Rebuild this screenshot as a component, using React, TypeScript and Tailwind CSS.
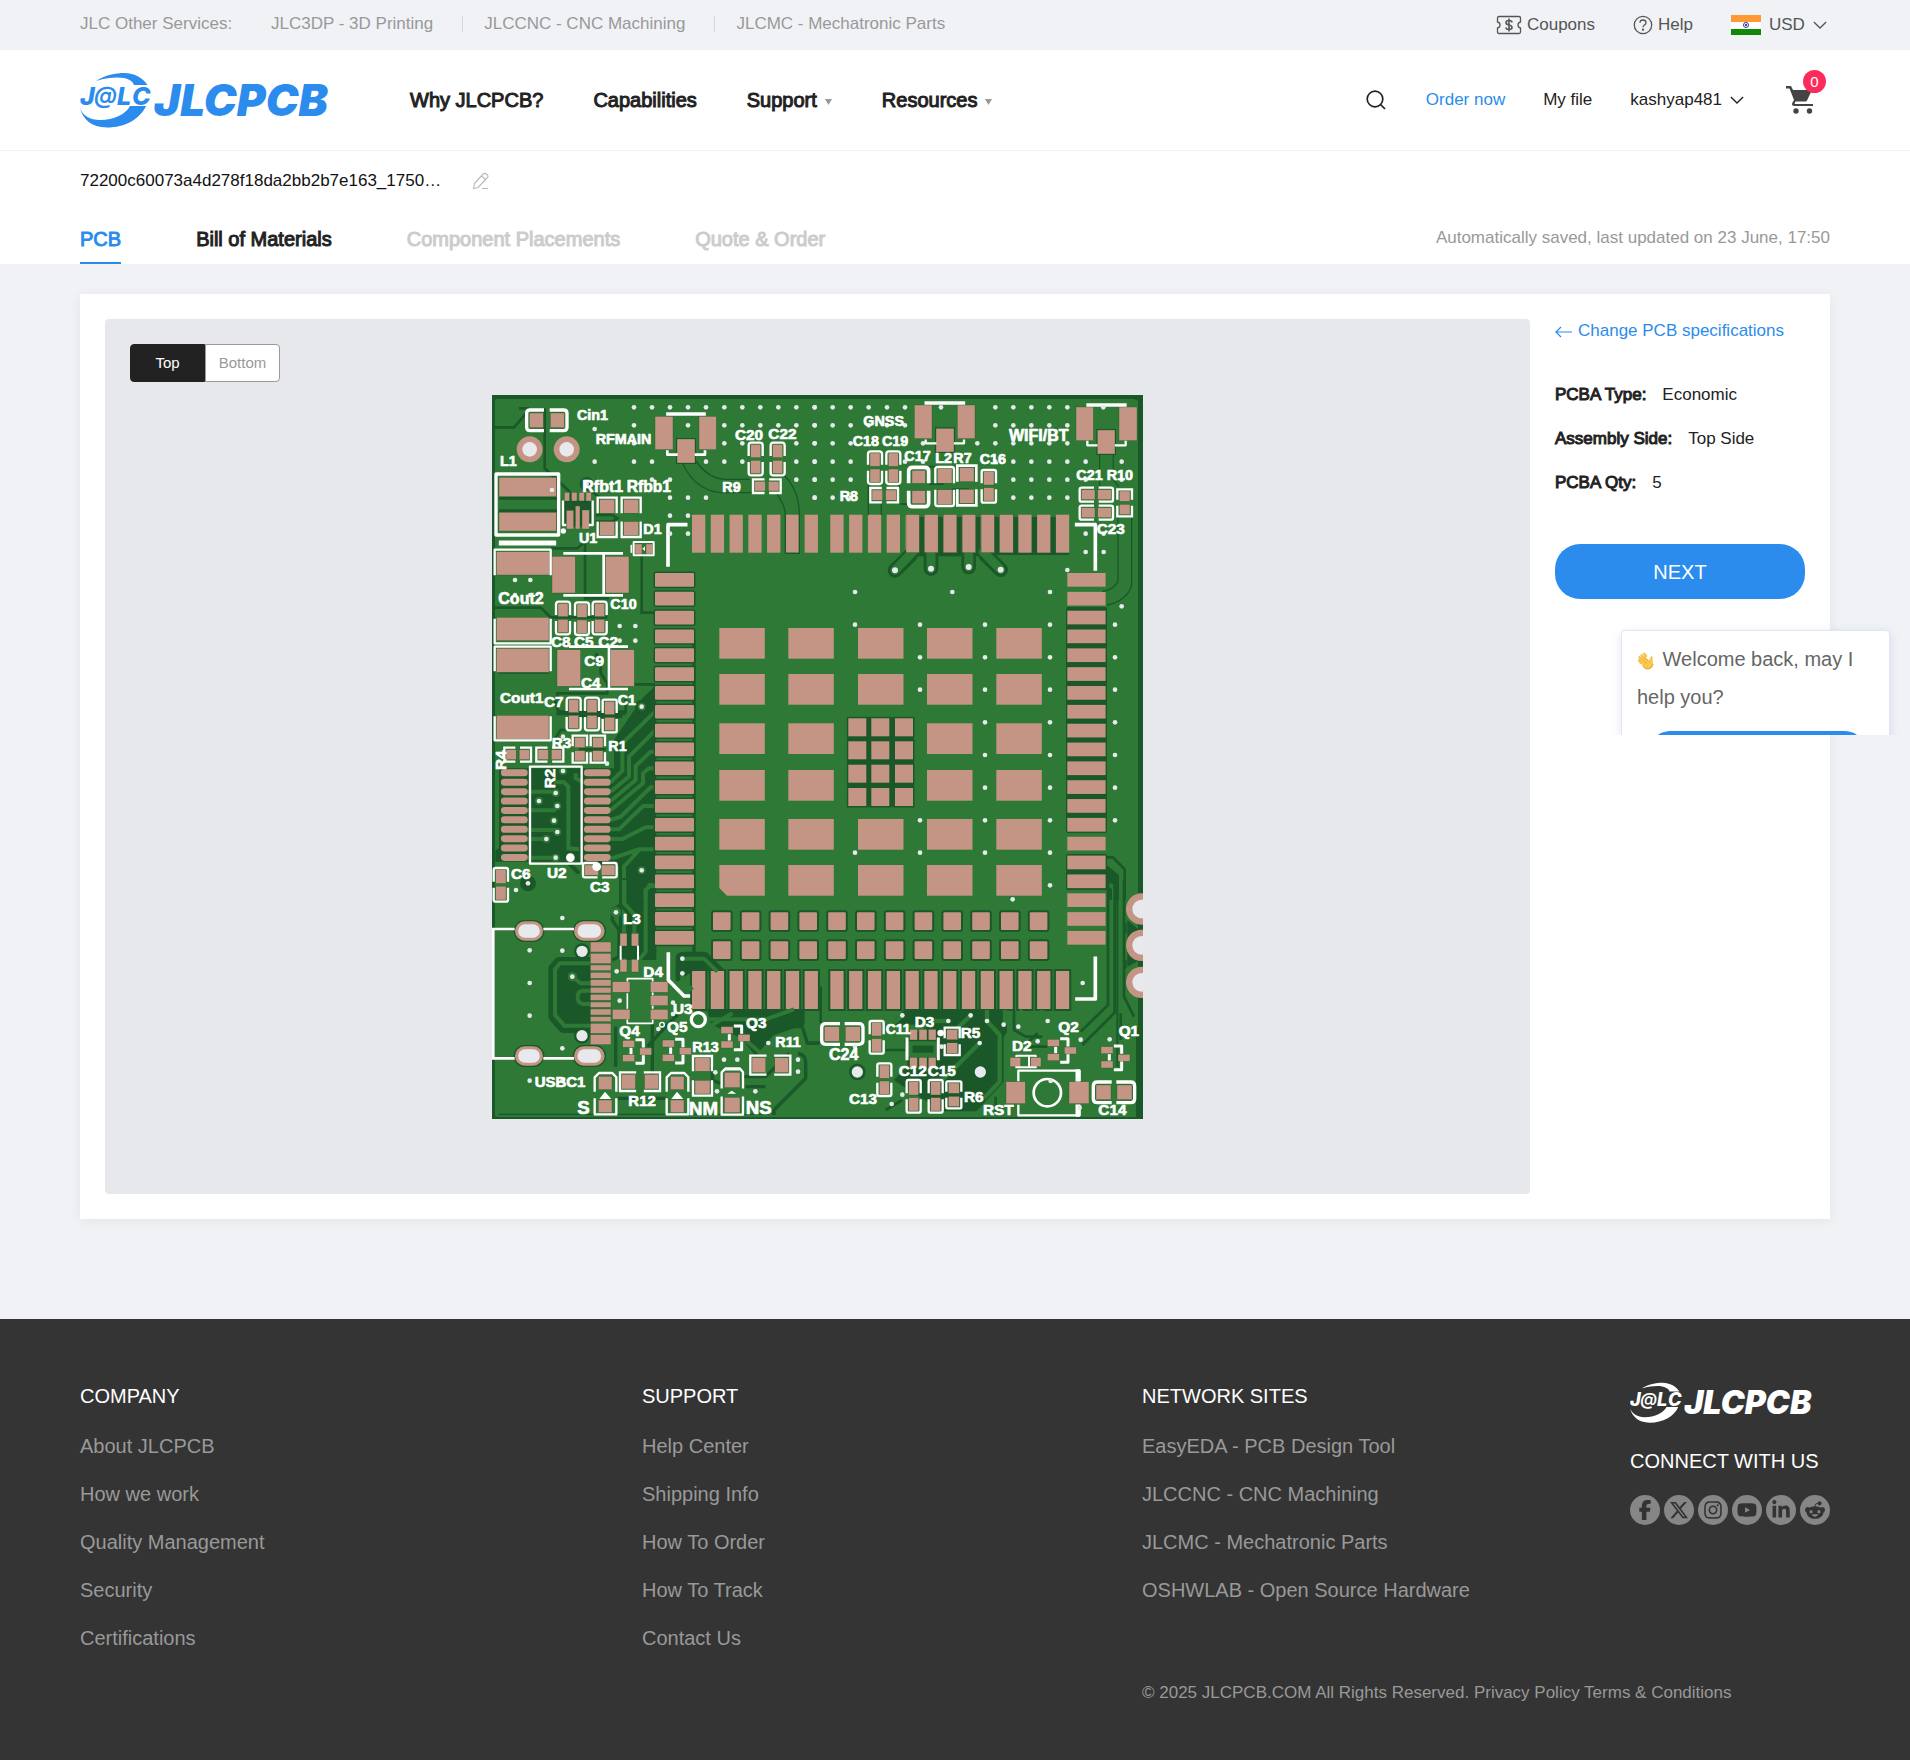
import React, { useState } from "react";
import { FaFacebookF, FaInstagram, FaLinkedinIn, FaRedditAlien, FaXTwitter, FaYoutube } from "react-icons/fa6";

const BOARD = "#2e7935";
const DARK = "#1a5829";
const PAD = "#c49484";
const HOLE = "#e7e9ed";

type Rect = [number, number, number, number];
/* direction, x, y, width, height, gap between the pads, corner radius */
type Part = ["H" | "V", number, number, number, number, number, number, number?];
type Label = [string, number, number, number?, number?];

function partPads([dir, x, y, w, h, gap, , sw = 6]: Part): Rect[] {
  const i = sw - 1;
  if (dir === "V") {
    const ph = (h - 2 * i - gap) / 2;
    return [
      [x + i + 1, y + i, w - 2 * i - 2, ph],
      [x + i + 1, y + i + ph + gap, w - 2 * i - 2, ph],
    ];
  }
  const pw = (w - 2 * i - gap) / 2;
  return [
    [x + i, y + i + 1, pw, h - 2 * i - 2],
    [x + i + pw + gap, y + i + 1, pw, h - 2 * i - 2],
  ];
}

function partOutline([dir, x, y, w, h, gap, r]: Part): string {
  const g = Math.max(gap, 18) / 2;
  if (dir === "V") {
    const m = y + h / 2;
    return `M${x} ${m - g}V${y + r}Q${x} ${y} ${x + r} ${y}H${x + w - r}Q${x + w} ${y} ${x + w} ${y + r}V${m - g}M${x} ${m + g}V${y + h - r}Q${x} ${y + h} ${x + r} ${y + h}H${x + w - r}Q${x + w} ${y + h} ${x + w} ${y + h - r}V${m + g}`;
  }
  const m = x + w / 2;
  const k = g - 2;
  return `M${m - k} ${y}H${x + r}Q${x} ${y} ${x} ${y + r}V${y + h - r}Q${x} ${y + h} ${x + r} ${y + h}H${m - k}M${m + k} ${y}H${x + w - r}Q${x + w} ${y} ${x + w} ${y + r}V${y + h - r}Q${x + w} ${y + h} ${x + w - r} ${y + h}H${m + k}`;
}

type TileProps = {
  x: number;
  y: number;
  back?: React.ReactNode;
  front?: React.ReactNode;
  pads?: Rect[];
  parts?: Part[];
  silk?: [string, number][];
  labels?: Label[];
  vias?: [number, number][];
};

/* One section of the board, drawn at three units to the pixel. */
function Tile({ x, y, back, front, pads = [], parts = [], silk = [], labels = [], vias = [] }: TileProps) {
  return (
    <g transform={`translate(${x} ${y}) scale(0.33333)`}>
      {back}
      {[...pads, ...parts.flatMap(partPads)].map(([a, b, w, h], i) => (
        <rect key={i} x={a} y={b} width={w} height={h} fill={PAD} stroke={DARK} strokeWidth="1" />
      ))}
      <g fill="none" stroke="#fff">
        {parts.map((p, i) => (
          <path key={i} d={partOutline(p)} strokeWidth={(p[7] ?? 6) + 1} />
        ))}
        {silk.map(([d, w], i) => (
          <path key={i} d={d} strokeWidth={w + 1} strokeLinecap="square" strokeLinejoin="round" />
        ))}
      </g>
      {front}
      <g fill={HOLE}>
        {vias.map(([a, b], i) => (
          <circle key={i} cx={a} cy={b} r="7" />
        ))}
      </g>
      <g
        fill="#fff"
        stroke="#fff"
        strokeWidth="2"
        strokeLinejoin="round"
        fontFamily='"Liberation Sans", Arial, sans-serif'
        fontWeight="700"
      >
        {labels.map(([t, a, b, size = 43, rot = 0], i) => (
          <text key={i} x={a} y={b} fontSize={size} transform={rot ? `rotate(${rot} ${a} ${b})` : undefined}>
            {t}
          </text>
        ))}
      </g>
    </g>
  );
}

const range = (n: number) => Array.from({ length: n }, (_, i) => i);
const rowVias = (y: number, xs: number[]): [number, number][] => xs.map((x) => [x, y]);

function transistor(dx: number, dy: number): { pads: Rect[]; silk: [string, number][] } {
  return {
    pads: [
      [431 + dx, 481 + dy, 36, 21],
      [431 + dx, 524 + dy, 36, 21],
      [482 + dx, 504 + dy, 36, 21],
    ],
    silk: [
      [`M${474 + dx} ${479 + dy}H${493 + dx}V${498 + dy}M${493 + dx} ${530 + dy}V${550 + dy}H${474 + dx}`, 8],
      [`M${456 + dx} ${508 + dy}V${518 + dy}`, 8],
    ],
  };
}
const q4 = transistor(0, 0);
const q5 = transistor(119, -1);
const q3 = transistor(295, -41);
const q2 = transistor(284, -3);
const q1 = transistor(445, 19);

function Board() {
  const padX = [...range(7).map((i) => 693 + i * 18.77), ...range(13).map((i) => 831.3 + i * 18.8)];
  const padY = range(20).map((i) => 573 + i * 18.84);
  const bigX = [720.3, 789.3, 859, 928, 997.3];
  const bigY = [628, 674, 723.3, 770, 819, 865];
  return (
    <svg viewBox="493 395 651 724" className="h-auto w-full max-w-[651px]" role="img" aria-label="Top side of the circuit board">
      <rect x="493" y="395" width="651" height="724" fill={DARK} />
      <rect x="496" y="399" width="643" height="718" rx="2" fill={BOARD} />

      {/* copper behind the module */}
      <g fill={DARK}>
        <rect x="914" y="517" width="156" height="38" />
        <rect x="1067" y="607" width="41" height="226" rx="2" />
        <rect x="1067" y="854" width="41" height="36" rx="2" />
        <rect x="848" y="717" width="67" height="90" rx="2" />
      </g>
      <g transform="translate(480 640) scale(0.33333)">
        <path d="M532 135L490 175L405 300V385H60V665H300L420 680V960H532Z" fill={DARK} />
        <path d="M645 0V950" stroke={DARK} strokeWidth="10" />
        <g fill="none" stroke={BOARD} strokeWidth="12">
          <path d="M395 427L430 392V310L528 215M395 455L450 410V350L528 272M395 483L470 420V378L515 335H528M395 511L492 430V400L510 385H528M395 540L425 530L515 442H528M395 568H420L492 498H528M395 597H430L500 562H528M395 653H405L480 628H550M435 960V680L480 630M500 780V745L510 735H528" />
          <path d="M145 455H230M145 511H225L235 498M145 597H200M145 653H230M225 427H255L268 440V625L300 628M145 570H235M290 400V415L316 428" />
        </g>
      </g>

      {padX.map((x, i) => (
        <g key={i}>
          <rect x={x} y="514.7" width="13.3" height="38" fill={PAD} />
          <rect x={x} y="971" width="13.3" height="38" fill={PAD} stroke={DARK} strokeWidth="4" paintOrder="stroke" />
        </g>
      ))}
      {padY.map((y, i) => (
        <g key={i} fill={PAD}>
          <rect x="656" y={y} width="39" height="13.7" rx="1" stroke={DARK} strokeWidth="3" paintOrder="stroke" />
          <rect x="1068.3" y={y} width="38.3" height="13.7" />
        </g>
      ))}
      {bigY.map((y, r) =>
        bigX.map((x, c) => {
          if (c === 2 && (r === 2 || r === 3)) return null;
          if (c === 0 && r === 5) return <path key={`${r}${c}`} d="M720.3 865H765.8V895.7H728L720.3 888Z" fill={PAD} />;
          return <rect key={`${r}${c}`} x={x} y={y} width="45.5" height="30.7" fill={PAD} />;
        }),
      )}
      {[718.3, 741.3, 764.7, 788].map((y) =>
        [849.3, 872.3, 896].map((x) => <rect key={`${x}${y}`} x={x} y={y} width="18" height="18" fill={PAD} stroke={DARK} strokeWidth="3" paintOrder="stroke" />),
      )}
      {[912.3, 941.3].map((y) =>
        range(12).map((i) => (
          <rect key={`${y}${i}`} x={714 + i * 28.8} y={y} width="17.6" height="17.6" rx="1" fill={PAD} stroke={DARK} strokeWidth="4" paintOrder="stroke" />
        )),
      )}

      {/* upper left */}
      <Tile
        x={480}
        y={385}
        back={
          <g fill="none" stroke={DARK} strokeWidth="8">
            <path d="M48 127H105L150 75M120 70H150M197 70V250L272 320V350M60 340H235M60 377H235M215 490H295L318 470V640H390M488 510V683H528M48 668H185L215 697H385" />
            <path d="M610 233C640 300 690 323 730 323H820M648 225C680 270 710 283 740 283H812M915 270C945 300 961 340 961 390M895 328C910 350 919 370 919 390M919 388V505H961V388" strokeWidth="4" />
            <rect x="258" y="350" width="80" height="70" fill={DARK} />
            <circle cx="323" cy="297" r="17" fill={DARK} />
            <path d="M340 320L372 345M350 390H400L415 400L400 410H350" />
            <rect x="594" y="162" width="54" height="72" strokeWidth="6" />
          </g>
        }
        pads={[
          [60, 277, 172, 58], [60, 382, 172, 56], [256, 322, 16, 26], [278, 322, 16, 26], [300, 322, 16, 26], [321, 322, 16, 26],
          [262, 376, 22, 56], [289, 363, 14, 69], [309, 375, 22, 57], [468, 477, 21, 30], [501, 477, 20, 30], [52, 500, 160, 70],
          [52, 697, 158, 70], [219, 514, 70, 110], [379, 514, 71, 110], [528, 94, 54, 100], [660, 94, 52, 100], [594, 162, 54, 72],
        ]}
        parts={[
          ["H", 143, 75, 121, 62, 21, 10, 9], ["V", 356, 338, 57, 118, 25, 0], ["V", 428, 338, 57, 118, 25, 0],
          ["V", 809, 173, 42, 98, 8, 8], ["V", 875, 173, 42, 98, 8, 8], ["H", 822, 283, 83, 41, 9, 0],
          ["V", 231, 650, 42, 98, 8, 8], ["V", 288, 652, 42, 98, 8, 8], ["V", 341, 650, 42, 98, 8, 8],
        ]}
        silk={[
          ["M51 267H239V450H51Z", 9], ["M67 474H224", 14], ["M47 567V494H215V567M47 705V775H215V705", 6], ["M257 505H428M374 505V630M257 631H428", 7],
          ["M252 350V420H258M341 350V420H333", 6], ["M464 471H524V511H464Z", 5], ["M457 482V501", 4], ["M567 540V419H620", 10],
          ["M567 87H675", 10], ["M565 200V209H592M651 209H678V200", 7],
        ]}
        front={
          <>
            {[152, 263].map((cx) => (
              <g key={cx}>
                <circle cx={cx} cy="193" r="39" fill={PAD} />
                <circle cx={cx} cy="193" r="22" fill={HOLE} />
              </g>
            ))}
            <circle cx="253" cy="438" r="8" fill="#fff" />
            <path d="M490 491L498 484V498Z" fill="#fff" />
          </>
        }
        vias={[
          ...rowVias(67, [465, 519, 573, 627, 681, 736, 790, 844, 898, 952, 1007]),
          ...rowVias(121, [465, 627, 736, 790, 844, 898, 952, 1007]),
          ...rowVias(175, [465, 736, 790, 952, 1007]),
          ...rowVias(230, [347, 465, 519, 681, 736, 790, 952, 1007]),
          ...rowVias(284, [519, 573, 952, 1007]),
          ...rowVias(338, [573, 627, 681, 1007]),
          ...rowVias(392, [573, 627]),
          ...rowVias(446, [573, 627]),
          [347, 132], [219, 315], [323, 297], [108, 585], [154, 585], [108, 630], [154, 630], [422, 723], [469, 723], [422, 767], [469, 767],
        ]}
        labels={[
          ["Cin1", 294, 106], ["RFMAIN", 350, 178], ["C20", 768, 166, 46], ["C22", 868, 162, 46], ["L1", 63, 244], ["Rfbt1", 310, 320, 48],
          ["Rfbb1", 443, 320, 47], ["R9", 730, 320], ["U1", 300, 475], ["D1", 493, 447], ["Cout2", 58, 657, 48], ["C10", 394, 672],
          ["C8", 216, 785, 46], ["C5", 285, 785, 46], ["C2", 358, 785, 46],
        ]}
      />

      {/* upper right */}
      <Tile
        x={810}
        y={385}
        back={
          <g fill="none" stroke={DARK}>
            <path d="M305 510L258 556M366 510V551M479 510V546M530 510L575 554" strokeWidth="44" strokeLinecap="round" />
            <path d="M310 508H550" strokeWidth="12" />
            <path d="M312 500L258 556M366 500V551M479 500V546M522 500L575 554" stroke={BOARD} strokeWidth="27" strokeLinecap="round" />
            <path d="M178 300V390M217 350V390M872 205V310M913 205V285L930 305M927 395V590C915 610 895 618 880 620M968 395V600C960 635 925 655 893 660M985 45L972 38" strokeWidth="4" />
            <path d="M360 297H405M430 313H480M360 245H385M270 290V310M275 357H300" strokeWidth="6" />
            <path d="M381 130H435V201H381ZM865 135H918V207H865Z" strokeWidth="6" />
            {[258, 366, 479, 575].map((x, i) => (
              <circle key={x} cx={x} cy={[556, 551, 546, 554][i]} r="9" fill={HOLE} stroke="none" />
            ))}
          </g>
        }
        pads={[
          [316, 60, 53, 101], [445, 60, 53, 101], [381, 130, 54, 71], [801, 66, 52, 101], [930, 66, 54, 101], [865, 135, 53, 72],
          ...range(6).map((i): Rect => [291 + i * 56.3, 389, 40, 114]),
        ]}
        parts={[
          ["V", 177, 199, 42, 98, 8, 8], ["V", 232, 199, 42, 98, 8, 8], ["H", 184, 309, 83, 43, 9, 0], ["V", 299, 247, 60, 118, 22, 12, 10],
          ["V", 379, 246, 56, 117, 20, 7], ["V", 445, 242, 57, 119, 23, 0, 7], ["V", 518, 255, 43, 98, 8, 6], ["H", 812, 308, 100, 42, 8, 6],
          ["H", 812, 362, 100, 42, 8, 6], ["V", 925, 313, 44, 81, 9, 0],
        ]}
        silk={[
          ["M352 54H463", 10], ["M350 167V175H379M438 175H465V167", 6], ["M837 60H948", 9], ["M835 171V181H862M921 181H950V171", 6], ["M803 419H859V552", 10],
        ]}
        vias={[
          ...rowVias(67, [17, 71, 125, 179, 234, 288, 396, 559, 613, 667, 721, 775, 883]),
          ...rowVias(121, [17, 71, 125, 179, 234, 288, 559, 613, 667, 721, 775]),
          ...rowVias(175, [17, 71, 125, 342, 505, 559, 613, 667, 721, 775]),
          ...rowVias(230, [17, 71, 125, 288, 342, 559, 613, 667, 721, 775, 830, 938]),
          ...rowVias(284, [17, 71, 125, 613, 667, 721, 775, 830, 938]),
          ...rowVias(338, [17, 71, 125, 613, 667, 721, 775]),
          ...rowVias(446, [830, 884]),
          ...rowVias(501, [830, 884]),
          ...rowVias(621, [138, 430, 723]),
          ...rowVias(719, [138, 333, 528, 723, 918]),
          [775, 555], [938, 664],
        ]}
        labels={[
          ["GNSS", 163, 122], ["C18", 131, 183], ["C19", 219, 183], ["C17", 286, 228], ["L2", 379, 235], ["R7", 433, 234], ["C16", 512, 237],
          ["WIFI/BT", 600, 167, 48], ["C21", 802, 286], ["R10", 893, 286], ["R8", 92, 348], ["C23", 863, 446, 46],
        ]}
      />

      {/* middle left */}
      <Tile
        x={480}
        y={640}
        back={
          <g fill="none" stroke={DARK} strokeWidth="8">
            <path d="M235 175V160H385V130L365 100V50M228 180L238 215H440V170M300 328H380M232 222L440 222M445 133H528M60 97H210M225 300L245 270H262M350 40L365 60M300 230H430" />
            <circle cx="488" cy="200" r="16" fill={BOARD} />
            <circle cx="488" cy="691" r="16" fill={BOARD} />
            <circle cx="147" cy="730" r="20" fill={DARK} />
            <path d="M55 665V635L66 628M270 670L300 700" strokeWidth="12" />
            {[[230, 459], [180, 483], [235, 498], [225, 542], [235, 576], [202, 597], [230, 653], [252, 393]].map(([a, b]) => (
              <circle key={`${a}${b}`} cx={a} cy={b} r="12" fill={BOARD} stroke="none" />
            ))}
          </g>
        }
        pads={[[52, 25, 158, 72], [52, 226, 158, 72], [234, 29, 71, 110], [395, 29, 71, 110]]}
        parts={[
          ["V", 263, 173, 42, 98, 8, 8], ["V", 318, 173, 42, 98, 8, 8], ["V", 371, 179, 42, 98, 8, 4], ["V", 281, 287, 43, 81, 9, 0],
          ["V", 335, 287, 43, 81, 9, 0], ["H", 76, 323, 80, 42, 9, 0], ["H", 172, 323, 81, 42, 9, 0], ["H", 312, 669, 101, 43, 8, 6], ["V", 44, 684, 43, 101, 8, 6],
        ]}
        silk={[
          ["M47 90V20H215V90M47 232V301H215V232", 6], ["M274 20H443M390 20V147M274 147H443", 7], ["M153 380H308V671H153Z", 6],
        ]}
        front={
          <>
            {range(10).map((i) => (
              <g key={i} fill={PAD}>
                <rect x="66" y={388 + i * 28.2} width="80" height="21" rx="10" />
                <rect x="315" y={388 + i * 28.2} width="80" height="21" rx="10" />
              </g>
            ))}
            <circle cx="274" cy="653" r="13" fill="#fff" />
            <circle cx="353" cy="680" r="13" fill="#fff" />
          </>
        }
        vias={[
          [488, 200], [488, 691], [147, 730], [384, 371], [230, 459], [180, 483], [235, 498], [225, 542], [235, 576], [202, 597], [230, 653], [252, 393], [252, 290], [111, 750],
        ]}
        labels={[
          ["C9", 316, 79, 46], ["C4", 306, 144, 46], ["C1", 416, 195], ["Cout1", 63, 190, 46], ["C7", 195, 200, 46], ["R3", 218, 325, 46], ["R1", 388, 333],
          ["R4", 82, 390, 46, -90], ["R2", 227, 445, 46, -90], ["U2", 204, 713, 46], ["C3", 333, 757, 46], ["C6", 96, 718, 46],
        ]}
      />

      {/* middle right */}
      <Tile
        x={810}
        y={640}
        back={
          <g fill="none" stroke={DARK} strokeWidth="8">
            <path d="M893 652H912L947 688V780M893 745L905 750V780" />
            <path d="M893 675L930 705V780H915V735L893 722Z" fill={DARK} stroke="none" />
          </g>
        }
        vias={[
          ...rowVias(52, [333, 528, 723, 918]),
          ...rowVias(149, [333, 528, 723, 918]),
          ...rowVias(247, [528, 723, 918]),
          ...rowVias(345, [528, 723, 918]),
          ...rowVias(443, [528, 723, 918]),
          ...rowVias(541, [333, 528, 723, 918]),
          ...rowVias(638, [138, 333, 528, 723]),
          [723, 736], [611, 778],
        ]}
      />

      {/* lower left */}
      <Tile
        x={480}
        y={880}
        back={
          <g fill="none" stroke={DARK} strokeWidth="10" strokeLinejoin="round">
            <path d="M335 245H240L222 265V410L252 445H335" strokeWidth="28" />
            <path d="M335 250H245L228 270V405L258 437H335Z" fill={DARK} stroke="none" />
            <path d="M335 250H243L228 268V405L256 437H335M335 310H305L280 290M335 332H310Q296 334 296 352Q296 370 312 372H425V390" stroke={BOARD} strokeWidth="12" />
            <path d="M400 90L425 75L460 110V160M400 90V120L420 150V230L400 240M420 0H500V60L470 110M500 0V210L480 240" />
            <path d="M436 0V70L466 105V160M528 18H512L500 30V215L440 290" stroke={BOARD} strokeWidth="12" />
            <path d="M595 235Q595 220 615 220H680L728 268H640L595 300Z" fill={DARK} />
            <path d="M610 236H675L715 275M610 280V300L640 330" stroke={BOARD} strokeWidth="12" />
            <path d="M690 392H972V430L880 462L830 520L790 470L700 430Z" fill={DARK} />
            <path d="M690 418H860L945 388M800 480L845 520M690 440L760 400" stroke={BOARD} strokeWidth="12" />
            <path d="M520 430V590M505 500L560 440L600 400M890 440H970L985 490H1020M957 520Q980 525 980 545V595L885 690V705M795 590H860L930 520M800 620H860M416 655H560M700 560V600L725 610M410 440V560" />
            <path d="M420 200H475V230H420Z" fill={DARK} />
            <path d="M300 280V290M60 703H870" strokeWidth="4" />
            {[[150, 84], [331, 92]].map(([cx, w]) =>
              [153, 528].map((cy) => <rect key={`${cx}${cy}`} x={cx - w / 2 - 4} y={cy - 33} width={w + 8} height="66" rx="33" fill={DARK} stroke="none" />),
            )}
            <circle cx="309" cy="214" r="24" fill={DARK} stroke="none" />
            <circle cx="309" cy="467" r="24" fill={DARK} stroke="none" />
            <circle cx="411" cy="97" r="16" fill={BOARD} stroke="none" />
            <circle cx="280" cy="290" r="14" fill={BOARD} stroke="none" />
          </g>
        }
        pads={[
          [334, 186, 62, 30], [334, 220, 62, 31], [334, 255, 62, 17], [334, 277, 62, 18], [334, 299, 62, 19], [334, 322, 62, 17], [334, 343, 62, 18],
          [334, 366, 62, 16], [334, 387, 62, 18], [334, 410, 62, 15], [334, 430, 62, 30], [334, 464, 62, 30],
          [423, 160, 21, 38], [457, 160, 22, 38], [423, 238, 21, 38], [457, 238, 22, 38],
          [400, 305, 53, 32], [400, 388, 53, 30], [514, 305, 53, 32], [514, 346, 53, 31], [514, 388, 53, 31],
          [358, 589, 41, 40], [358, 660, 41, 38], [574, 589, 41, 40], [574, 660, 41, 38], [736, 577, 47, 46], [736, 652, 47, 46],
          ...q4.pads, ...q5.pads, ...q3.pads,
        ]}
        parts={[["V", 642, 528, 57, 119, 27, 0], ["H", 423, 577, 120, 56, 27, 0], ["H", 814, 527, 120, 57, 27, 0]]}
        silk={[
          ["M43 147H103M197 147H281M43 535H103M197 535H281M43 147V535", 7], ["M425 200V236M477 200V236", 5],
          ["M445 302V296H521V302M445 342V384M521 340V343M521 380V384M445 421V430H521V422", 4], ["M568 222V300L615 348H628", 10],
          ["M347 632V592L360 579H400L412 592V632M347 658V703H412V658", 6], ["M563 632V592L576 579H616L628 592V632M563 658V703H628V658", 6],
          ["M728 622V577L740 565H782L792 577V622M742 568H778M728 653V704H792V653", 6],
          ...q4.silk, ...q5.silk, ...q3.silk,
        ]}
        front={
          <>
            {[[150, 84, 65], [331, 92, 71]].map(([cx, w, iw]) =>
              [153, 528].map((cy) => (
                <g key={`${cx}${cy}`}>
                  <rect x={cx - w / 2} y={cy - 29} width={w} height="58" rx="29" fill={PAD} />
                  <rect x={cx - iw / 2} y={cy - 20} width={iw} height="40" rx="20" fill={HOLE} />
                </g>
              )),
            )}
            <circle cx="309" cy="214" r="17" fill={HOLE} />
            <circle cx="309" cy="467" r="17" fill={HOLE} />
            <circle cx="658" cy="419" r="21" fill="none" stroke="#fff" strokeWidth="10" />
            <circle cx="549" cy="434" r="7" fill="none" stroke="#fff" strokeWidth="4" />
            <path d="M361 657L378 635L397 657ZM577 657L594 635L613 657ZM745 641L758 632L772 641Z" fill="#fff" />
          </>
        }
        vias={[
          [152, 211], [250, 212], [250, 114], [280, 290], [152, 309], [152, 407], [250, 505], [152, 602], [250, 602], [411, 97], [413, 274], [422, 362],
          [538, 447], [868, 489], [735, 539], [775, 539], [709, 577], [714, 634], [829, 634], [957, 539], [957, 575], [610, 236], [610, 280], [582, 368], [582, 402],
        ]}
        labels={[
          ["L3", 432, 131, 46], ["D4", 493, 291, 46], ["U3", 582, 402, 46], ["Q4", 421, 467, 46], ["Q5", 564, 457, 46], ["Q3", 801, 444, 46], ["R13", 640, 516, 43],
          ["R11", 889, 501], ["R12", 448, 677, 45], ["USBC1", 167, 621, 45], ["S", 295, 701, 56], ["NM", 630, 706, 56], ["NS", 800, 701, 56],
        ]}
      />

      {/* lower right */}
      <Tile
        x={810}
        y={880}
        back={
          <g fill="none" stroke={DARK} strokeWidth="8" strokeLinejoin="round">
            <path d="M300 392H590V455L580 470V605L500 690H400L260 600L300 560L290 480L380 430H250L290 392Z" fill={DARK} />
            <path d="M534 390V423L572 465V605L525 655M485 406L440 450M418 423H370M588 390V434M640 390L628 405V440M698 390V405L716 423M512 489L400 600M280 406L230 450M304 490H380V525H304Z" stroke={BOARD} strokeWidth="13" />
            <path d="M897 0V375L815 455M917 0V398L820 495M945 0V350L975 410M560 650V700M35 320V430M0 488H35M230 510H290M90 540L75 530M686 460L660 484V500H715M615 390V450L650 470H700M935 400V480M985 440V710M280 660L230 690" />
            <path d="M950 130V160M950 240V265M925 0V560" strokeWidth="6" />
            <path d="M955 120L1002 160V235L955 260Z" fill={DARK} stroke="none" />
            <circle cx="145" cy="576" r="25" fill={DARK} stroke="none" />
            <circle cx="514" cy="576" r="25" fill={DARK} stroke="none" />
            {[[998, 87], [998, 196], [998, 307]].map(([cx, cy]) => (
              <g key={cy} stroke="none">
                <circle cx={cx} cy={cy} r="47" fill={PAD} />
                <circle cx={cx} cy={cy} r="28" fill={HOLE} />
              </g>
            ))}
          </g>
        }
        pads={[
          [302, 448, 23, 32], [330, 448, 24, 32], [358, 448, 23, 32], [302, 532, 23, 32], [330, 532, 24, 32], [358, 532, 23, 32],
          [603, 532, 32, 28], [665, 532, 31, 28], [591, 605, 58, 66], [780, 605, 60, 66], ...q2.pads, ...q1.pads,
        ]}
        parts={[
          ["H", 38, 431, 124, 62, 18, 12, 9], ["V", 182, 423, 42, 98, 8, 6], ["V", 407, 443, 45, 82, 9, 0], ["V", 205, 550, 42, 98, 8, 6],
          ["V", 293, 600, 42, 98, 8, 6], ["V", 359, 600, 42, 98, 8, 6], ["V", 412, 604, 45, 81, 9, 4], ["H", 853, 606, 124, 62, 18, 12, 9],
        ]}
        silk={[
          ["M294 477V536M388 477V536", 8], ["M622 528V527H680V528M622 562H680M660 527V562", 5], ["M628 600V572H812V600M628 678V706H812V678", 6],
          ["M806 574V598M806 680V704", 12], ["M859 235V357H804", 10], ...q2.silk, ...q1.silk,
        ]}
        front={
          <>
            <circle cx="715" cy="638" r="41" fill="none" stroke="#fff" strokeWidth="8" />
            <circle cx="395" cy="459" r="10" fill="#fff" />
            <circle cx="145" cy="576" r="17" fill={HOLE} />
            <circle cx="514" cy="576" r="17" fill={HOLE} />
          </>
        }
        vias={[
          [821, 309], [280, 406], [485, 406], [418, 423], [534, 423], [584, 434], [628, 440], [716, 423], [512, 489], [686, 484], [815, 479],
          [902, 478], [280, 644], [248, 672], [725, 603], [812, 683], [398, 500], [138, 500],
        ]}
        labels={[
          ["C24", 60, 539, 48], ["C11", 230, 463, 42], ["D3", 317, 441, 46], ["R5", 455, 473, 46], ["C12", 269, 589, 46], ["C15", 356, 589, 46], ["C13", 120, 671, 46],
          ["R6", 465, 667, 46], ["Q2", 748, 457, 46], ["D2", 609, 512, 46], ["Q1", 929, 467, 46], ["RST", 522, 705, 46], ["C14", 868, 705, 46],
        ]}
      />
    </svg>
  );
}

function Logo({ className }: { className: string }) {
  return (
    <svg viewBox="80 72 250 56" className={className} fill="currentColor" role="img" aria-label="JLCPCB">
      <path d="M96 81C105 75 116 73 124 73C135 73 143 78 147.500 85H134C132 79 121 74 96 81Z" />
      <path d="M80 108C83 119 91 127.500 107 127.500C125 127.500 140 119 146 106H130C126 114 114 120 100 120C90 120 83 116 80 108Z" />
      <g fontFamily="Inter, sans-serif" fontStyle="italic">
        <text x="80" y="105" fontSize="25" fontWeight="800">J</text>
        <text x="94" y="103" fontSize="23" fontWeight="600">@</text>
        <text x="117" y="105" fontSize="25" fontWeight="800">L</text>
        <text x="132" y="105" fontSize="25" fontWeight="800">C</text>
        <text x="154" y="115.500" fontSize="44" fontWeight="900">JLCPCB</text>
      </g>
    </svg>
  );
}

function Chevron({ className }: { className: string }) {
  return (
    <svg viewBox="0 0 16 16" className={className} fill="none" stroke="currentColor" strokeWidth="1.500" aria-hidden="true">
      <path d="M1 4.500L8 11.500L15 4.500" />
    </svg>
  );
}

function Caret() {
  return (
    <svg viewBox="0 0 7 6" className="mt-1 h-[6px] w-[7px] text-[#999]" fill="currentColor" aria-hidden="true">
      <path d="M0 0H7L3.500 6Z" />
    </svg>
  );
}

const services = ["JLC3DP - 3D Printing", "JLCCNC - CNC Machining", "JLCMC - Mechatronic Parts"];

function TopBar() {
  return (
    <div className="flex h-[50px] items-center justify-between bg-[#f0f2f6] px-20 text-[17px] leading-5">
      <div className="flex items-center whitespace-nowrap pb-0.5 text-[#999]">
        <span className="w-[191px]">JLC Other Services:</span>
        {services.map((s, i) => (
          <React.Fragment key={s}>
            {i > 0 && <span className="ml-[29px] mr-[21px] h-4 w-px bg-[#d5d7db]" />}
            <a href="#services">{s}</a>
          </React.Fragment>
        ))}
      </div>
      <div className="flex items-center text-[#555]">
        <a href="#coupons" className="flex items-center gap-[5px]">
          <svg viewBox="0 0 26 20" className="h-5 w-[26px]" fill="none" stroke="currentColor" strokeWidth="1.300" aria-hidden="true">
            <path d="M3 1.500H23Q24.500 1.500 24.500 3V7Q22 7.500 22 10T24.500 13V17Q24.500 18.500 23 18.500H3Q1.500 18.500 1.500 17V13Q4 12.500 4 10T1.500 7V3Q1.500 1.500 3 1.500Z" />
            <path d="M16 7.500Q16 5.500 13 5.500T10 7.500Q10 9.500 13 10T16 12.500Q16 14.500 13 14.500T10 12.500M13 3.500V16.500" strokeWidth="1.600" />
          </svg>
          Coupons
        </a>
        <a href="#help" className="ml-[38px] flex items-center gap-[5px]">
          <svg viewBox="0 0 20 20" className="size-5" fill="none" stroke="currentColor" strokeWidth="1.300" aria-hidden="true">
            <circle cx="10" cy="10" r="8.700" />
            <path d="M7 7.800Q7 5 10 5T13 7.800Q13 9 11.500 10T10 12.300" />
            <circle cx="10" cy="14.700" r="0.500" fill="currentColor" />
          </svg>
          Help
        </a>
        <label className="relative ml-[38px] flex items-center">
          <svg viewBox="0 0 30 20" className="mr-2 h-5 w-[30px]" aria-hidden="true">
            <rect width="30" height="20" fill="#fff" />
            <rect width="30" height="7" fill="#f93" />
            <rect y="14" width="30" height="6" fill="#128807" />
            <circle cx="15" cy="10" r="2.500" fill="none" stroke="#000088" strokeWidth="0.800" />
            <circle cx="15" cy="10" r="1" fill="#000088" />
          </svg>
          <select aria-label="Currency" className="w-[61px] appearance-none bg-transparent">
            <option>USD</option>
          </select>
          <Chevron className="pointer-events-none absolute right-[3px] size-[14px]" />
        </label>
      </div>
    </div>
  );
}

function Header() {
  return (
    <header className="flex h-[101px] items-center border-b border-[#f0f1f3] bg-white px-20 text-[#222]">
      <a href="#home">
        <Logo className="h-14 w-[250px] text-[#2b8ced]" />
      </a>
      <nav className="ml-20 flex items-center gap-[50px] text-xl [-webkit-text-stroke:1px]">
        <a href="#why">Why JLCPCB?</a>
        <a href="#capabilities">Capabilities</a>
        <a href="#support" className="flex items-center gap-2">Support <Caret /></a>
        <a href="#resources" className="flex items-center gap-2">Resources <Caret /></a>
      </nav>
      <div className="ml-auto flex items-center text-[17px]">
        <button type="button" aria-label="Search">
          <svg viewBox="0 0 20 20" className="size-5" fill="none" stroke="currentColor" strokeWidth="1.700" aria-hidden="true">
            <circle cx="9" cy="9" r="7.800" />
            <path d="M14.500 14.500L19 19" />
          </svg>
        </button>
        <a href="#order" className="ml-10 text-[#2b8ced]">Order now</a>
        <a href="#files" className="ml-[38px]">My file</a>
        <button type="button" className="ml-[38px] flex items-center gap-2">
          kashyap481 <Chevron className="size-[14px]" />
        </button>
        <a href="#cart" aria-label="Cart, 0 items" className="relative ml-[42px] mr-4 block">
          <svg viewBox="0 0 28 28" className="size-7 text-[#444]" fill="currentColor" aria-hidden="true">
            <path d="M0 0H5L7 4H26L21 14.500Q20.500 15.500 19.500 15.500H9.500L8.500 18H27V20H8Q5 19.500 6.500 16.500L8 14L3.500 2.500H0Z" />
            <circle cx="10" cy="25" r="2.700" />
            <circle cx="23.500" cy="25" r="2.700" />
          </svg>
          <span className="absolute -right-3 -top-4 flex size-[23px] items-center justify-center rounded-full bg-[#fb2c5b] text-[15px] leading-none text-white">0</span>
        </a>
      </div>
    </header>
  );
}

function ProjectBar() {
  const tab = "border-b-2 pb-[9px] [-webkit-text-stroke:1px]";
  return (
    <div className="bg-white px-20 pt-[18px]">
      <div className="flex items-center gap-[21px] text-[17px] leading-6 text-[#111]">
        <h1 className="w-[371px] whitespace-nowrap">72200c60073a4d278f18da2bb2b7e163_1750…</h1>
        <button type="button" aria-label="Rename" className="text-[#bbb]">
          <svg viewBox="0 0 17 18" className="h-[18px] w-[17px]" fill="none" stroke="currentColor" strokeWidth="1.200" aria-hidden="true">
            <path d="M1.500 16.500L2.500 11.500L11 2Q13 0.500 15 2.500T15 6L6 15.500ZM9.500 4L13.300 7.500M10 16.500H16" />
          </svg>
        </button>
      </div>
      <div className="mt-8 flex items-start justify-between">
        <div className="flex gap-[75px] text-xl" role="tablist">
          <button type="button" role="tab" aria-selected="true" className={`${tab} border-[#2b8ced] text-[#2b8ced]`}>PCB</button>
          <button type="button" role="tab" aria-selected="false" className={`${tab} border-transparent text-[#222]`}>Bill of Materials</button>
          <button type="button" role="tab" aria-selected="false" disabled className={`${tab} border-transparent text-[#ccc]`}>Component Placements</button>
          <button type="button" role="tab" aria-selected="false" disabled className={`${tab} border-transparent text-[#ccc]`}>Quote &amp; Order</button>
        </div>
        <p className="pt-px text-[17px] leading-6 text-[#999]">Automatically saved, last updated on 23 June, 17:50</p>
      </div>
    </div>
  );
}

const specs = [
  ["PCBA Type:", "Economic"],
  ["Assembly Side:", "Top Side"],
  ["PCBA Qty:", "5"],
];

function Workspace() {
  const [side, setSide] = useState("Top");
  return (
    <main className="bg-[#f0f2f6] px-20 pb-[100px] pt-[30px]">
      <section className="flex gap-[25px] bg-white p-[25px] shadow-[0_2px_12px_rgba(0,0,0,0.06)]">
        <div className="flex-1 rounded bg-[#e7e8ec] px-[25px] pb-[75px] pt-[25px]">
          <div className="flex h-[38px] text-[15px]">
            {["Top", "Bottom"].map((s) => (
              <button
                key={s}
                type="button"
                aria-pressed={side === s}
                onClick={() => setSide(s)}
                className={`w-[75px] border first:rounded-l last:rounded-r ${side === s ? "border-[#222] bg-[#222] text-white" : "border-[#999] bg-white text-[#999]"}`}
              >
                {s}
              </button>
            ))}
          </div>
          <div className="mt-[13px] flex justify-center">
            <Board />
          </div>
        </div>
        <aside className="w-[250px] text-[17px] leading-6 text-[#222]">
          <a href="#specifications" className="flex items-center gap-[6px] text-[#2b8ced]">
            <svg viewBox="0 0 17 12" className="mt-0.5 h-3 w-[17px]" fill="none" stroke="currentColor" strokeWidth="1.200" aria-hidden="true">
              <path d="M6 1L1 6L6 11M1 6H17" />
            </svg>
            Change PCB specifications
          </a>
          <dl className="mt-10 flex flex-col gap-5">
            {specs.map(([k, v]) => (
              <div key={k} className="flex gap-4">
                <dt className="[-webkit-text-stroke:1px]">{k}</dt>
                <dd>{v}</dd>
              </div>
            ))}
          </dl>
          <button type="button" className="mt-[49px] h-[55px] w-full rounded-[25px] bg-[#2b8ced] text-xl text-white">NEXT</button>
        </aside>
      </section>
    </main>
  );
}

function WavingHand() {
  return (
    <svg viewBox="0 0 18 18" className="mr-0.5 inline size-[18px]" aria-hidden="true">
      <path d="M6 5.500L4.600 3.200M9 4L7.200 1.800M4.500 8L2.500 5.200M4 11L2 8.500" stroke="#f7c14a" strokeWidth="2.500" strokeLinecap="round" />
      <path d="M3.500 8L7 3.500L12 8.500Q13 5 14.500 4Q16 4 15.500 6L16 11Q16 16 11.500 17Q8 17.500 5.500 14Z" fill="#f9c84f" />
      <path d="M5.500 14Q8 17.500 11.500 17Q15.500 16 16 12" fill="none" stroke="#e0a02f" strokeWidth="1" />
      <path d="M5 6.500L9.500 11.500M7.500 5L11.500 9.500" stroke="#e0a02f" strokeWidth="0.700" />
    </svg>
  );
}

function ChatPrompt() {
  return (
    <div className="absolute right-0 top-[620px] h-[115px] w-[304px] overflow-hidden pl-[15px] pr-5 pt-[10px]" role="status">
      <div className="h-[200px] rounded border border-[#e2e6f2] bg-white px-[15px] pt-[9px] text-xl leading-[38px] text-[#666] shadow-[0_2px_10px_rgba(70,100,180,0.16)]">
        <p>
          <WavingHand /> Welcome back, may I help you?
        </p>
        <button type="button" aria-label="Start chat" className="mx-[13px] mt-[15px] block h-10 w-[215px] rounded-full bg-[#2b8ced]" />
      </div>
    </div>
  );
}

const columns: [string, string[]][] = [
  ["COMPANY", ["About JLCPCB", "How we work", "Quality Management", "Security", "Certifications"]],
  ["SUPPORT", ["Help Center", "Shipping Info", "How To Order", "How To Track", "Contact Us"]],
  ["NETWORK SITES", ["EasyEDA - PCB Design Tool", "JLCCNC - CNC Machining", "JLCMC - Mechatronic Parts", "OSHWLAB - Open Source Hardware"]],
];

const socials = [
  { name: "Facebook", Icon: FaFacebookF },
  { name: "X", Icon: FaXTwitter },
  { name: "Instagram", Icon: FaInstagram },
  { name: "YouTube", Icon: FaYoutube },
  { name: "LinkedIn", Icon: FaLinkedinIn },
  { name: "Reddit", Icon: FaRedditAlien },
];

function Footer() {
  return (
    <footer className="grid grid-cols-[562fr_500fr_488fr_200px] bg-[#343434] px-20 pb-[54px] pt-[63px] text-xl leading-7 text-[#999]">
      {columns.map(([title, links]) => (
        <div key={title}>
          <h2 className="text-white">{title}</h2>
          <ul className="mt-[22px] flex flex-col gap-5">
            {links.map((l) => (
              <li key={l} className="whitespace-nowrap">
                <a href="#footer">{l}</a>
              </li>
            ))}
          </ul>
        </div>
      ))}
      <div>
        <Logo className="h-[41px] w-[183px] text-white" />
        <h2 className="mt-6 whitespace-nowrap text-white">CONNECT WITH US</h2>
        <div className="mt-5 flex gap-1">
          {socials.map(({ name, Icon }) => (
            <a key={name} href="#social" aria-label={name} className="flex size-[30px] items-center justify-center rounded-full bg-[#868686] text-[#333]">
              <Icon className="size-5" />
            </a>
          ))}
        </div>
      </div>
      <p className="col-span-2 col-start-3 mt-[27px] whitespace-nowrap text-[17px]">
        © 2025 JLCPCB.COM All Rights Reserved. <a href="#privacy">Privacy Policy</a> <a href="#terms">Terms &amp; Conditions</a>
      </p>
    </footer>
  );
}

export default function App() {
  return (
    <div className="relative min-h-screen bg-[#343434] font-['Liberation_Sans',Arial,sans-serif]">
      <TopBar />
      <Header />
      <ProjectBar />
      <Workspace />
      <Footer />
      <ChatPrompt />
    </div>
  );
}
